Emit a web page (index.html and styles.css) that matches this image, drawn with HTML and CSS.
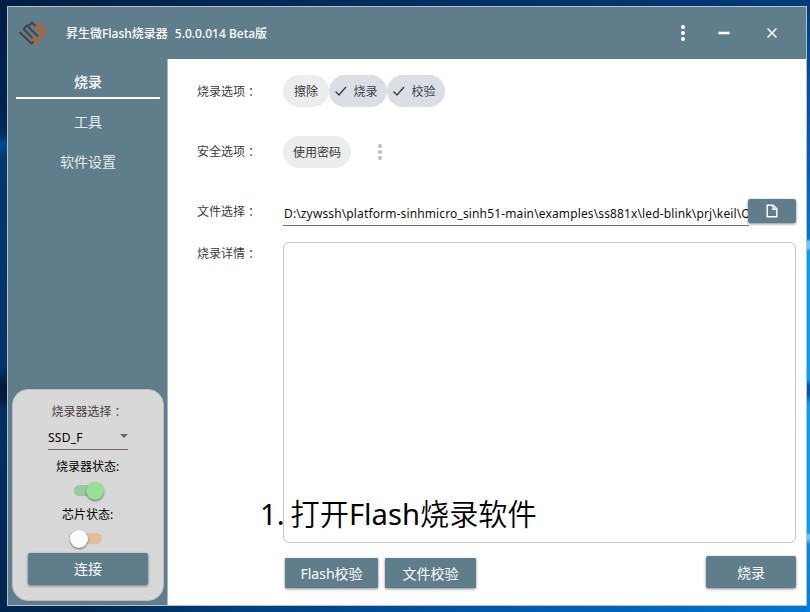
FILE: index.html
```html
<!DOCTYPE html>
<html lang="zh-CN">
<head>
<meta charset="utf-8">
<title>昇生微Flash烧录器</title>
<link rel="stylesheet" href="styles.css">
</head>
<body>
<div class="window">
  <header class="titlebar">
    <svg class="logo" viewBox="0 0 30 26" fill="none" stroke-width="2.1">
      <g stroke="#c05f24"><path d="M28.500 13L20 3.500l-3.500 3.500 7.500 8-7 8.500-3-3"/><path d="M7.500 13l7 7 3-3.500"/></g>
      <g stroke="#45434d"><path d="M.5 12l12 11.500 2-2"/><path d="M4.500 9l9 9"/><path d="M4.500 9L8 5.500l11 11"/><path d="M9 6.500L13 2.500l3.500 3.500"/></g>
    </svg>
    <h1 class="title"><span class="name">昇生微Flash烧录器</span><span class="version">5.0.0.014 Beta版</span></h1>
    <div class="controls">
      <svg viewBox="0 0 20 20" fill="#fff"><circle cx="10" cy="4" r="2"/><circle cx="10" cy="10" r="2"/><circle cx="10" cy="16" r="2"/></svg>
      <svg viewBox="0 0 20 20" stroke="#fff" stroke-width="2.6"><path d="M4.500 10h11"/></svg>
      <svg viewBox="0 0 20 20" stroke="#fff" stroke-width="1.500"><path d="M5.500 5.500l9 9m0-9l-9 9"/></svg>
    </div>
  </header>
  <div class="body">
    <aside class="sidebar">
      <nav class="nav">
        <a class="active">烧录</a>
        <a>工具</a>
        <a>软件设置</a>
      </nav>
      <section class="device">
        <div class="device-label picker-label">烧录器选择<span class="colon" lang="zh-TW">：</span></div>
        <div class="select"><span>SSD_F</span><i></i></div>
        <div class="device-label">烧录器状态:</div>
        <div class="toggle on"><i></i></div>
        <div class="device-label">芯片状态:</div>
        <div class="toggle off"><i></i></div>
        <button class="btn connect">连接</button>
      </section>
    </aside>
    <main class="main">
      <div class="row burn-row">
        <label>烧录选项<span class="colon" lang="zh-TW">：</span></label>
        <span class="chip erase">擦除</span>
        <span class="chip checked"><svg viewBox="0 0 14 12"><path d="M1.500 6.500l3.500 3.500 7-8"/></svg>烧录</span>
        <span class="chip checked"><svg viewBox="0 0 14 12"><path d="M1.500 6.500l3.500 3.500 7-8"/></svg>校验</span>
      </div>
      <div class="row safe-row">
        <label>安全选项<span class="colon" lang="zh-TW">：</span></label>
        <span class="chip password">使用密码</span>
        <svg class="more" viewBox="0 0 20 20"><circle cx="10" cy="4" r="2"/><circle cx="10" cy="10" r="2"/><circle cx="10" cy="16" r="2"/></svg>
      </div>
      <div class="row file-row">
        <label>文件选择<span class="colon" lang="zh-TW">：</span></label>
        <div class="path">D:\zywssh\platform-sinhmicro_sinh51-main\examples\ss881x\led-blink\prj\keil\O</div>
        <button class="btn browse"><svg viewBox="0 0 12 14"><path d="M1.200 1.200h6l3.600 3.600v8h-9.600zM7 1.200v4h4"/></svg></button>
      </div>
      <div class="row log-row">
        <label>烧录详情<span class="colon" lang="zh-TW">：</span></label>
        <div class="log"></div>
      </div>
      <div class="actions">
        <button class="btn flash">Flash校验</button>
        <button class="btn file">文件校验</button>
        <button class="btn burn">烧录</button>
      </div>
    </main>
  </div>
</div>
<div class="caption"><span>1.</span><span class="caption-text">打开<b>Flash</b>烧录软件</span></div>
</body>
</html>
```
FILE: styles.css
```css
* { box-sizing: border-box; }
body {
  margin: 0;
  width: 810px;
  height: 612px;
  padding: 6px 3px 6px 7px;
  overflow: hidden;
  position: relative;
  font-family: "Noto Sans", "Noto Sans CJK SC", sans-serif;
  font-size: 12px;
  background:
    linear-gradient(#001f45, #002550 19%, #003062 22%, #004a91 23.500%, #00386f 26%, #003468 60%, #001b3a 63%, #001b3a 65%, #003064 67%, #002550) left / 7px 100% no-repeat,
    linear-gradient(#003b7a, #0054a5 14%, #0060c0 28%, #0078d7 39%, #7cc4f0 39.500%, #7cc4f0 40.500%, #00a2f8 41%, #00a2f8 62%, #0058ac 63%, #0058ac 64.500%, #00a2f8 66%, #00a2f8 87%, #7cc4f0 87.500%, #7cc4f0 88%, #008ce8 89%, #007fdc) right / 3px 100% no-repeat,
    linear-gradient(90deg, #002750, #00264d 10%, #003f7d 30%, #0056a8 60%, #0077d5) bottom / 100% 7px no-repeat,
    linear-gradient(90deg, #001f45, #002b5c 40%, #003b78) top / 100% 6px no-repeat;
}
.window {
  height: 600px;
  width: 800px;
  border: 1px solid #b9bfc5;
  background: #fff;
  display: flex;
  flex-direction: column;
}
.titlebar {
  height: 52px;
  flex: none;
  display: flex;
  align-items: center;
  padding: 0 24px 0 11px;
  background: #607d8b;
  color: #fff;
}
.logo { width: 30px; height: 26px; }
.title {
  display: flex;
  gap: 7px;
  margin: 2px 0 0 17px;
  font-size: 12px;
  font-weight: 500;
  line-height: 20px;
  white-space: nowrap;
}
.controls { margin-left: auto; display: flex; align-items: center; }
.controls svg { width: 20px; height: 20px; }
.controls svg + svg { margin-left: 21px; }
.controls svg:last-child { margin-left: 28px; }
.body { flex: 1; display: flex; min-height: 0; }
.sidebar {
  width: 160px;
  flex: none;
  display: flex;
  flex-direction: column;
  justify-content: space-between;
  background: #607d8b;
  border-right: 1px solid #a9b6bd;
}
.nav { padding: 3px 7px 0 8px; color: #e5eaec; font-size: 14px; }
.nav a { display: block; height: 40px; line-height: 39px; text-align: center; }
.nav .active { height: 37px; margin-bottom: 3px; border-bottom: 2px solid #fff; color: #fff; font-weight: 500; }
.device {
  width: 152px;
  height: 212px;
  margin: 0 0 4px 4px;
  padding-top: 13px;
  border: 1px solid #bdbdbd;
  border-radius: 16px;
  background: #d8d8d8;
  display: flex;
  flex-direction: column;
  align-items: center;
}
.colon { font-family: "Noto Sans CJK TC", sans-serif; line-height: 1; vertical-align: -1px; }
.device-label { height: 18px; line-height: 18px; color: #000; padding-right: 1px; }
.picker-label { color: #4e3d40; }
.select {
  width: 80px;
  height: 25px;
  margin: 4px 0 8px;
  display: flex;
  align-items: center;
  justify-content: space-between;
  border-bottom: 1px solid #755f65;
  color: #000;
  letter-spacing: .25px;
}
.select i { border: 4px solid transparent; border-top-color: #755f65; border-bottom: 0; margin-bottom: 3px; }
.toggle {
  width: 28px;
  height: 11px;
  flex: none;
  margin: 9px 0 10px;
  border-radius: 6px;
  display: flex;
  align-items: center;
}
.toggle i { width: 18px; height: 18px; flex: none; border-radius: 50%; box-shadow: 0 1px 2px #0008; }
.toggle.on { background: #98c9a3; justify-content: flex-end; }
.toggle.on i { background: #96df94; margin-right: -2px; }
.toggle.off { background: #e1bf9b; margin: 9px 1px 9px 0; }
.toggle.off i { background: #fbfcfc; margin-left: -4px; }
.btn {
  padding: 0;
  border: 0;
  border-radius: 2px;
  background: #607d8b;
  color: #fff;
  font: inherit;
  font-size: 14px;
  box-shadow: 0 1px 3px #0007;
}
.connect { width: 120px; height: 32px; flex: none; padding-bottom: 2px; }
.main { flex: 1; min-width: 0; padding-left: 29px; color: #3b3b3b; }
.row { display: flex; }
.row label { width: 86px; height: 18px; flex: none; line-height: 18px; }
.burn-row { height: 32px; margin-top: 16px; align-items: center; }
.burn-row label { height: 19px; padding-top: 1px; }
.chip {
  height: 32px;
  border-radius: 16px;
  background: #eceeed;
  color: #393338;
  display: flex;
  align-items: center;
  justify-content: center;
}
.chip svg { width: 14px; height: 12px; margin-right: 5px; fill: none; stroke: #3c3c50; stroke-width: 1.400; }
.erase { width: 46px; }
.checked { width: 58px; padding-right: 4px; background: #dadfe3; color: #3c3c50; }
.password { width: 68px; }
.safe-row { height: 32px; margin-top: 29px; align-items: center; }
.more { width: 20px; height: 20px; margin-left: 19px; fill: #bdbdbd; }
.file-row { height: 30px; margin-top: 29px; }
.file-row label { margin-top: 6px; }
.path {
  width: 466px;
  height: 29px;
  padding: 7px 0 0 1px;
  border-bottom: 1px solid #707070;
  overflow: hidden;
  white-space: nowrap;
  line-height: 20px;
  letter-spacing: .135px;
  color: #111;
}
.browse { width: 48px; height: 24px; margin: 2px 0 0 -1px; display: flex; align-items: center; justify-content: center; position: relative; }
.browse svg { width: 12px; height: 14px; fill: none; stroke: #fff; stroke-width: 1.400; }
.log-row { margin-top: 15px; }
.log-row label { margin-top: 3px; }
.log { width: 513px; height: 301px; border: 1px solid #c6c6c6; border-radius: 6px; }
.actions { display: flex; padding: 15px 10px 0 88px; }
.actions .btn { height: 30px; border-radius: 1px; padding-bottom: 1px; }
.flash { width: 93px; }
.file { width: 91px; margin-left: 7px; }
.actions .burn { width: 90px; height: 32px; margin-left: auto; margin-top: -2px; border-radius: 2px; padding-bottom: 0; }
.caption {
  position: absolute;
  left: 260px;
  top: 494px;
  display: flex;
  gap: 6px;
  color: #000;
  font-size: 29.200px;
  line-height: 40px;
  white-space: nowrap;
}
.caption-text { font-weight: 350; }
.caption b { font-weight: 400; }
```
